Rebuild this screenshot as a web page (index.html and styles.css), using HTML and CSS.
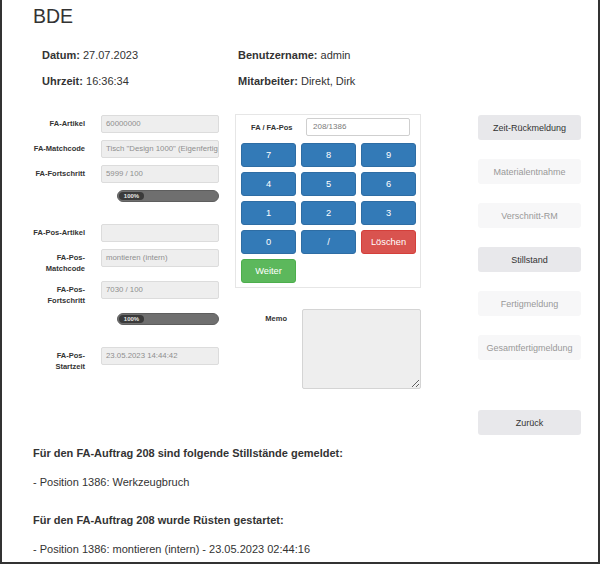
FILE: index.html
```html
<!DOCTYPE html>
<html lang="de">
<head>
<meta charset="utf-8">
<title>BDE</title>
<link rel="stylesheet" href="styles.css">
</head>
<body>
<div class="page">
  <h1 class="title">BDE</h1>

  <div class="info">
    <div class="info-col">
      <p class="info-line"><b>Datum:</b> 27.07.2023</p>
      <p class="info-line"><b>Uhrzeit:</b> 16:36:34</p>
    </div>
    <div class="info-col">
      <p class="info-line"><b>Benutzername:</b> admin</p>
      <p class="info-line"><b>Mitarbeiter:</b> Direkt, Dirk</p>
    </div>
  </div>

  <div class="main">
    <div class="form-col">
      <div class="form-grid">
        <label class="field-label">FA-Artikel</label>
        <div class="field">60000000</div>

        <label class="field-label">FA-Matchcode</label>
        <div class="field">Tisch "Design 1000" (Eigenfertig</div>

        <label class="field-label">FA-Fortschritt</label>
        <div class="field">5999 / 100</div>

        <div class="progress"><span class="progress-bar">100%</span></div>

        <label class="field-label">FA-Pos-Artikel</label>
        <div class="field"></div>

        <label class="field-label">FA-Pos-<br>Matchcode</label>
        <div class="field">montieren (intern)</div>

        <label class="field-label">FA-Pos-<br>Fortschritt</label>
        <div class="field">7030 / 100</div>

        <div class="progress"><span class="progress-bar">100%</span></div>

        <label class="field-label">FA-Pos-<br>Startzeit</label>
        <div class="field">23.05.2023 14:44:42</div>
      </div>
    </div>

    <div class="mid-col">
      <div class="keypad-panel">
        <div class="keypad-head">
          <span class="keypad-label">FA / FA-Pos</span>
          <div class="keypad-input">208/1386</div>
        </div>
        <div class="keypad">
          <button class="key key-blue">7</button>
          <button class="key key-blue">8</button>
          <button class="key key-blue">9</button>
          <button class="key key-blue">4</button>
          <button class="key key-blue">5</button>
          <button class="key key-blue">6</button>
          <button class="key key-blue">1</button>
          <button class="key key-blue">2</button>
          <button class="key key-blue">3</button>
          <button class="key key-blue">0</button>
          <button class="key key-blue">/</button>
          <button class="key key-red">Löschen</button>
          <button class="key key-green">Weiter</button>
        </div>
      </div>
      <div class="memo">
        <label class="memo-label">Memo</label>
        <textarea class="memo-box" readonly></textarea>
      </div>
    </div>

    <div class="btn-col">
      <button class="action">Zeit-Rückmeldung</button>
      <button class="action action-disabled">Materialentnahme</button>
      <button class="action action-disabled">Verschnitt-RM</button>
      <button class="action">Stillstand</button>
      <button class="action action-disabled">Fertigmeldung</button>
      <button class="action action-disabled">Gesamtfertigmeldung</button>
      <button class="action action-back">Zurück</button>
    </div>
  </div>

  <div class="messages">
    <p class="msg-head">Für den FA-Auftrag 208 sind folgende Stillstände gemeldet:</p>
    <p class="msg-item">- Position 1386: Werkzeugbruch</p>
    <p class="msg-head">Für den FA-Auftrag 208 wurde Rüsten gestartet:</p>
    <p class="msg-item">- Position 1386: montieren (intern) - 23.05.2023 02:44:16</p>
  </div>
</div>
</body>
</html>
```

FILE: styles.css
```css
html, body {
  margin: 0;
  padding: 0;
  background: #ffffff;
}

body {
  font-family: "Liberation Sans", Arial, sans-serif;
  color: #333333;
}

.page {
  box-sizing: border-box;
  width: 600px;
  height: 564px;
  overflow: hidden;
  border: 2px solid #333333;
  border-top: none;
  padding: 4px 0 0 31px;
  background: #ffffff;
}

.title {
  margin: 0;
  font-size: 19.5px;
  line-height: 24px;
  font-weight: normal;
  color: #333333;
}

.info {
  display: flex;
  margin-top: 19px;
  padding-left: 9px;
}

.info-col {
  display: flex;
  flex-direction: column;
  gap: 10px;
}

.info-col:first-child {
  width: 196px;
}

.info-line {
  margin: 0;
  font-size: 11px;
  line-height: 16px;
}

.main {
  display: flex;
  margin-top: 25px;
}

/* Left form column */
.form-col {
  width: 186px;
  padding-top: 1px;
}

.form-grid {
  display: grid;
  grid-template-columns: 52px 118px;
  column-gap: 16px;
  row-gap: 7px;
  align-items: start;
}

.field-label {
  font-size: 7.5px;
  font-weight: bold;
  line-height: 11px;
  padding-top: 3px;
  text-align: right;
  white-space: nowrap;
  color: #333333;
}

.field {
  box-sizing: border-box;
  height: 18px;
  background: #eeeeee;
  border: 1px solid #dcdcdc;
  border-radius: 2px;
  padding: 0 3px 0 4px;
  font-size: 7.8px;
  line-height: 16px;
  color: #8f8f8f;
  white-space: nowrap;
  overflow: hidden;
}

.progress {
  grid-column: 2;
  box-sizing: border-box;
  margin-left: 16px;
  margin-bottom: 15px;
  width: 102px;
  height: 12px;
  border-radius: 6px;
  background: #6f6f6f;
  border: 1px solid #5e5e5e;
  display: flex;
  align-items: center;
  padding: 0 1px;
}

.progress-bar {
  box-sizing: border-box;
  width: 25px;
  height: 8px;
  border-radius: 4px;
  background: #3a3a3a;
  color: #e6e6e6;
  font-size: 6px;
  font-weight: bold;
  line-height: 8px;
  text-align: center;
}

/* Middle column */
.mid-col {
  width: 186px;
  margin-left: 16px;
}

.keypad-panel {
  box-sizing: border-box;
  width: 186px;
  border: 1px solid #e6e6e6;
  padding: 3px 4px 4px 5px;
}

.keypad-head {
  display: flex;
  align-items: center;
  height: 18px;
}

.keypad-label {
  width: 55px;
  padding-left: 10px;
  box-sizing: border-box;
  font-size: 7.5px;
  font-weight: bold;
  white-space: nowrap;
  color: #333333;
}

.keypad-input {
  box-sizing: border-box;
  margin-left: 10px;
  width: 104px;
  height: 18px;
  background: #ffffff;
  border: 1px solid #cfcfcf;
  border-radius: 2px;
  padding: 0 6px;
  font-size: 8px;
  line-height: 16px;
  color: #7a7a7a;
}

.keypad {
  display: grid;
  grid-template-columns: repeat(3, 55px);
  grid-auto-rows: 24px;
  gap: 5px;
  margin-top: 7px;
}

.key {
  margin: 0;
  padding: 0;
  border-radius: 3px;
  font-family: "Liberation Sans", Arial, sans-serif;
  font-size: 9.3px;
  color: #ffffff;
  cursor: pointer;
}

.key-blue {
  background: #337ab7;
  border: 1px solid #2e6da4;
}

.key-red {
  background: #d9534f;
  border: 1px solid #d43f3a;
}

.key-green {
  background: #5cb85c;
  border: 1px solid #4cae4c;
}

.memo {
  display: flex;
  align-items: flex-start;
  margin-top: 21px;
}

.memo-label {
  width: 52px;
  padding-top: 4px;
  font-size: 7.5px;
  font-weight: bold;
  line-height: 11px;
  text-align: right;
  color: #333333;
}

.memo-box {
  box-sizing: border-box;
  margin: 0 0 0 15px;
  width: 119px;
  height: 80px;
  background: #eeeeee;
  border: 1px solid #d4d4d4;
  border-radius: 2px;
  resize: both;
  padding: 0;
}

/* Right buttons */
.btn-col {
  display: flex;
  flex-direction: column;
  gap: 19px;
  width: 103px;
  margin-left: 57px;
  padding-top: 1px;
}

.action {
  box-sizing: border-box;
  margin: 0;
  height: 25px;
  width: 103px;
  border: none;
  border-radius: 3px;
  background: #e8e8eb;
  color: #333333;
  font-family: "Liberation Sans", Arial, sans-serif;
  font-size: 9px;
  padding: 0;
  white-space: nowrap;
}

.action-disabled {
  background: #f7f7f8;
  color: #999999;
}

.action-back {
  margin-top: 31px;
}

/* Messages */
.messages {
  margin-top: 10px;
}

.msg-head {
  margin: 0 0 13px;
  font-size: 11px;
  line-height: 16px;
  font-weight: bold;
}

.msg-item {
  margin: 0 0 22px;
  font-size: 11px;
  line-height: 16px;
}
```
